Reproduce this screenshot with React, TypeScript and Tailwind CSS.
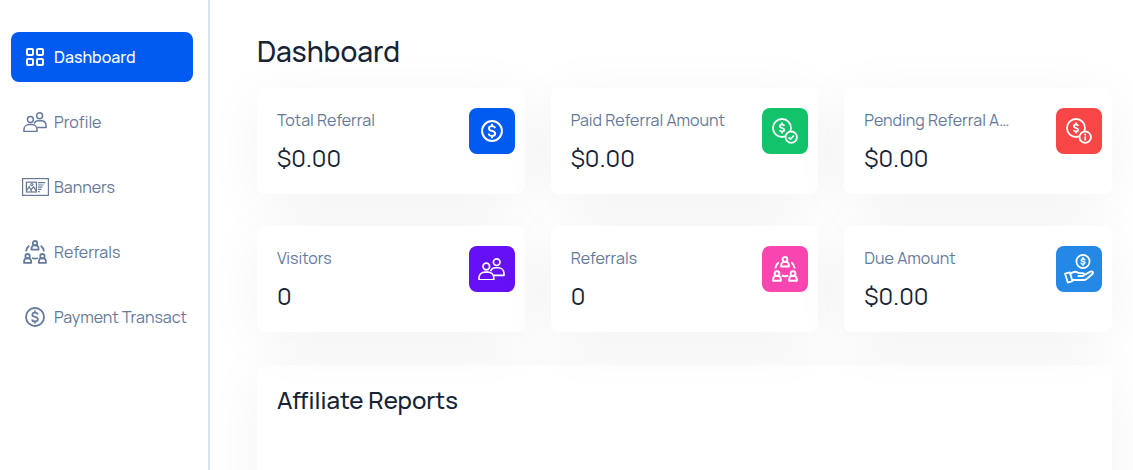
import type { ReactNode } from 'react'

type IconProps = { className?: string }

function GridIcon({ className }: IconProps) {
  return (
    <svg viewBox="0 0 18 18" className={className} fill="none" stroke="currentColor" strokeWidth="2">
      <rect x="1" y="1" width="6" height="6" rx="1" />
      <rect x="11" y="1" width="6" height="6" rx="1" />
      <rect x="1" y="11" width="6" height="6" rx="1" />
      <rect x="11" y="11" width="6" height="6" rx="1" />
    </svg>
  )
}

function PeopleIcon({ className }: IconProps) {
  return (
    <svg viewBox="0 0 26 22" className={className} fill="none" stroke="currentColor" strokeWidth="1.6" strokeLinejoin="round">
      <circle cx="8" cy="8.2" r="3.2" />
      <circle cx="18" cy="4" r="3.2" />
      <path d="M1 21v-2.2a5.6 5.6 0 0 1 5.6-5.2h3a5.6 5.6 0 0 1 5.6 5.2V21z" />
      <path d="M12 12.6c.8-2 2.4-3.2 4.6-3.2h2.8c3.2 0 5.4 2.2 5.6 5v2.4h-9.6" />
    </svg>
  )
}

function BannerIcon({ className }: IconProps) {
  return (
    <svg viewBox="0 0 27 18" className={className} fill="none" stroke="currentColor" strokeWidth="1.2">
      <rect x=".6" y=".6" width="25.8" height="16.8" />
      <rect x="4.4" y="4.2" width="10" height="9.8" />
      <circle cx="9.8" cy="6.6" r="1.1" />
      <path d="M4.6 12.4l2.6-3.8 2.6 5.2M8.8 12l2.8-3.2 2.6 4" />
      <path d="M16 4.6h7M16 7h5.6M16 9.2h4.4M16 11.4h3.4M16 13.6h1.8" />
    </svg>
  )
}

function NetworkIcon({ className }: IconProps) {
  return (
    <svg viewBox="0 0 24 24" className={className} fill="none" stroke="currentColor" strokeWidth="1.8" strokeLinejoin="round">
      <circle cx="12" cy="3.2" r="2.2" />
      <path d="M8.4 9.6c0-2.6 1.2-4.2 2.4-4.2h2.4c1.2 0 2.4 1.6 2.4 4.2z" />
      <circle cx="4.6" cy="16.2" r="2.2" />
      <path d="M1 22.8c0-2.8 1.2-4.4 2.4-4.4h2.4c1.2 0 2.4 1.6 2.4 4.4z" />
      <circle cx="19.4" cy="16.2" r="2.2" />
      <path d="M15.8 22.8c0-2.8 1.2-4.4 2.4-4.4h2.4c1.2 0 2.4 1.6 2.4 4.4z" />
      <path d="M6.2 5.8C4.4 7.2 3.4 9 3 11.4M17.8 5.8c1.800 1.400 2.800 3.200 3.200 5.600M9 18c2 .8 4 .8 6 0" />
    </svg>
  )
}

function DollarIcon({ className }: IconProps) {
  return (
    <svg viewBox="0 0 22 22" className={className} fill="none" stroke="currentColor" strokeWidth="2">
      <circle cx="11" cy="11" r="9.9" />
      <path
        d="M14 8.2c-.3-1.4-1.400-2.100-3-2.100-1.700 0-3 .8-3 2.300 0 1.600 1.300 2.100 3 2.500 1.900.5 3.200 1 3.200 2.600s-1.400 2.400-3.200 2.400-3.100-.8-3.300-2.400M11 3.800v2.400M11 15.800v2.400"
        strokeWidth="1.9"
      />
    </svg>
  )
}

function Coin() {
  return (
    <>
      <circle cx="10" cy="10" r="9" />
      <path d="M12.200 7.900c-.3-1-1.100-1.400-2.200-1.400-1.200 0-2.100.6-2.100 1.700S8.800 9.700 10 10s2.200.6 2.200 1.800-1 1.700-2.200 1.700-2-.4-2.200-1.400M10 4.500v2M10 13.500v2" />
    </>
  )
}

function CoinCheckIcon({ className }: IconProps) {
  return (
    <svg viewBox="0 0 26 26" className={className} fill="none" stroke="currentColor" strokeWidth="1.8">
      <Coin />
      <circle cx="19.2" cy="19.2" r="5.7" className="fill-[#12c36c]" />
      <path d="M16.6 19.300l2 1.800 3.200-3.600" />
    </svg>
  )
}

function CoinInfoIcon({ className }: IconProps) {
  return (
    <svg viewBox="0 0 26 26" className={className} fill="none" stroke="currentColor" strokeWidth="1.8">
      <Coin />
      <circle cx="19.2" cy="19.2" r="5.7" className="fill-[#f84545]" />
      <path d="M19.2 18.4v4M19.2 15.800v1.600" />
    </svg>
  )
}

function HandCoinIcon({ className }: IconProps) {
  return (
    <svg viewBox="0 0 30 30" className={className} fill="none" stroke="currentColor" strokeWidth="1.8" strokeLinejoin="round" strokeLinecap="round">
      <circle cx="19" cy="7.5" r="6.6" />
      <path
        d="M20.800 5.900c-.3-.7-.9-1-1.800-1-1 0-1.800.5-1.800 1.300s.8 1.100 1.800 1.300 1.900.5 1.900 1.300-.9 1.300-1.900 1.300-1.700-.3-1.900-1M19 3.600v1.300M19 10.100v1.300"
        strokeWidth="1.5"
      />
      <path d="M1 19.600l5-1.200 2.400 8.800-4.600 1.400z" />
      <path d="M6.400 20c2.200-2.200 5-2.800 7.600-1.400l1.200.6h3.400c2 0 2 2.800 0 2.800h-4.200M20.400 21l6-3.400c2-.9 3.400.8 2 2.400l-5.800 5c-1 .8-2 1-3.200 1H8.200" />
    </svg>
  )
}

const navItems: { label: string; icon: ReactNode; active?: boolean }[] = [
  { label: 'Dashboard', icon: <GridIcon className="w-[18px]" />, active: true },
  { label: 'Profile', icon: <PeopleIcon className="w-6" /> },
  { label: 'Banners', icon: <BannerIcon className="w-[27px]" /> },
  { label: 'Referrals', icon: <NetworkIcon className="w-6" /> },
  { label: 'Payment Transact', icon: <DollarIcon className="w-5" /> },
]

const stats: { label: string; value: string; color: string; icon: ReactNode }[] = [
  { label: 'Total Referral', value: '$0.00', color: 'bg-[#025bf1]', icon: <DollarIcon className="w-[22px]" /> },
  { label: 'Paid Referral Amount', value: '$0.00', color: 'bg-[#12c36c]', icon: <CoinCheckIcon className="w-[26px]" /> },
  { label: 'Pending Referral A…', value: '$0.00', color: 'bg-[#f84545]', icon: <CoinInfoIcon className="w-[26px]" /> },
  { label: 'Visitors', value: '0', color: 'bg-[#6610f8]', icon: <PeopleIcon className="w-[27px]" /> },
  { label: 'Referrals', value: '0', color: 'bg-[#f845b0]', icon: <NetworkIcon className="w-[26px]" /> },
  { label: 'Due Amount', value: '$0.00', color: 'bg-[#2388e6]', icon: <HandCoinIcon className="w-[30px]" /> },
]

export default function App() {
  return (
    <div className="flex h-screen overflow-hidden bg-white font-['Manrope','Inter',sans-serif] text-[#172335]">
      <aside className="w-[210px] shrink-0 border-r-2 border-[#d9e4f3] pt-8 pr-[15px] pl-[11px]">
        <nav className="flex flex-col gap-[15px]">
          {navItems.map((item) => (
            <a
              key={item.label}
              href="#"
              className={`flex h-[50px] items-center rounded-lg pl-2.5 ${item.active ? 'bg-[#025bf1] font-medium text-white' : 'text-[#64799b]'}`}
            >
              <span className="flex w-7 shrink-0 justify-center">{item.icon}</span>
              <span className="pl-[5px] whitespace-nowrap">{item.label}</span>
            </a>
          ))}
        </nav>
      </aside>

      <main className="min-w-0 flex-1 overflow-hidden pt-8 pr-[21px] pl-[47px]">
        <h1 className="mb-[18px] text-[28px] leading-[38px] font-medium">Dashboard</h1>

        <div className="grid grid-cols-3 gap-x-[26px] gap-y-8">
          {stats.map((stat) => (
            <div key={stat.label} className="flex items-start gap-6 rounded-lg bg-white py-5 pr-2.5 pl-5 shadow-[0_10px_60px_rgba(0,0,0,0.05)]">
              <div className="min-w-0 flex-1">
                <p className="leading-6 text-[#64799b]">{stat.label}</p>
                <p className="mt-2.5 text-2xl leading-8">{stat.value}</p>
              </div>
              <span className={`flex size-[46px] shrink-0 items-center justify-center rounded-lg text-white ${stat.color}`}>
                {stat.icon}
              </span>
            </div>
          ))}
        </div>

        <section className="mt-[33px] min-h-96 rounded-lg bg-white px-5 py-[19px] shadow-[0_10px_60px_rgba(0,0,0,0.05)]">
          <h2 className="text-2xl leading-8 font-medium">Affiliate Reports</h2>
        </section>
      </main>
    </div>
  )
}
